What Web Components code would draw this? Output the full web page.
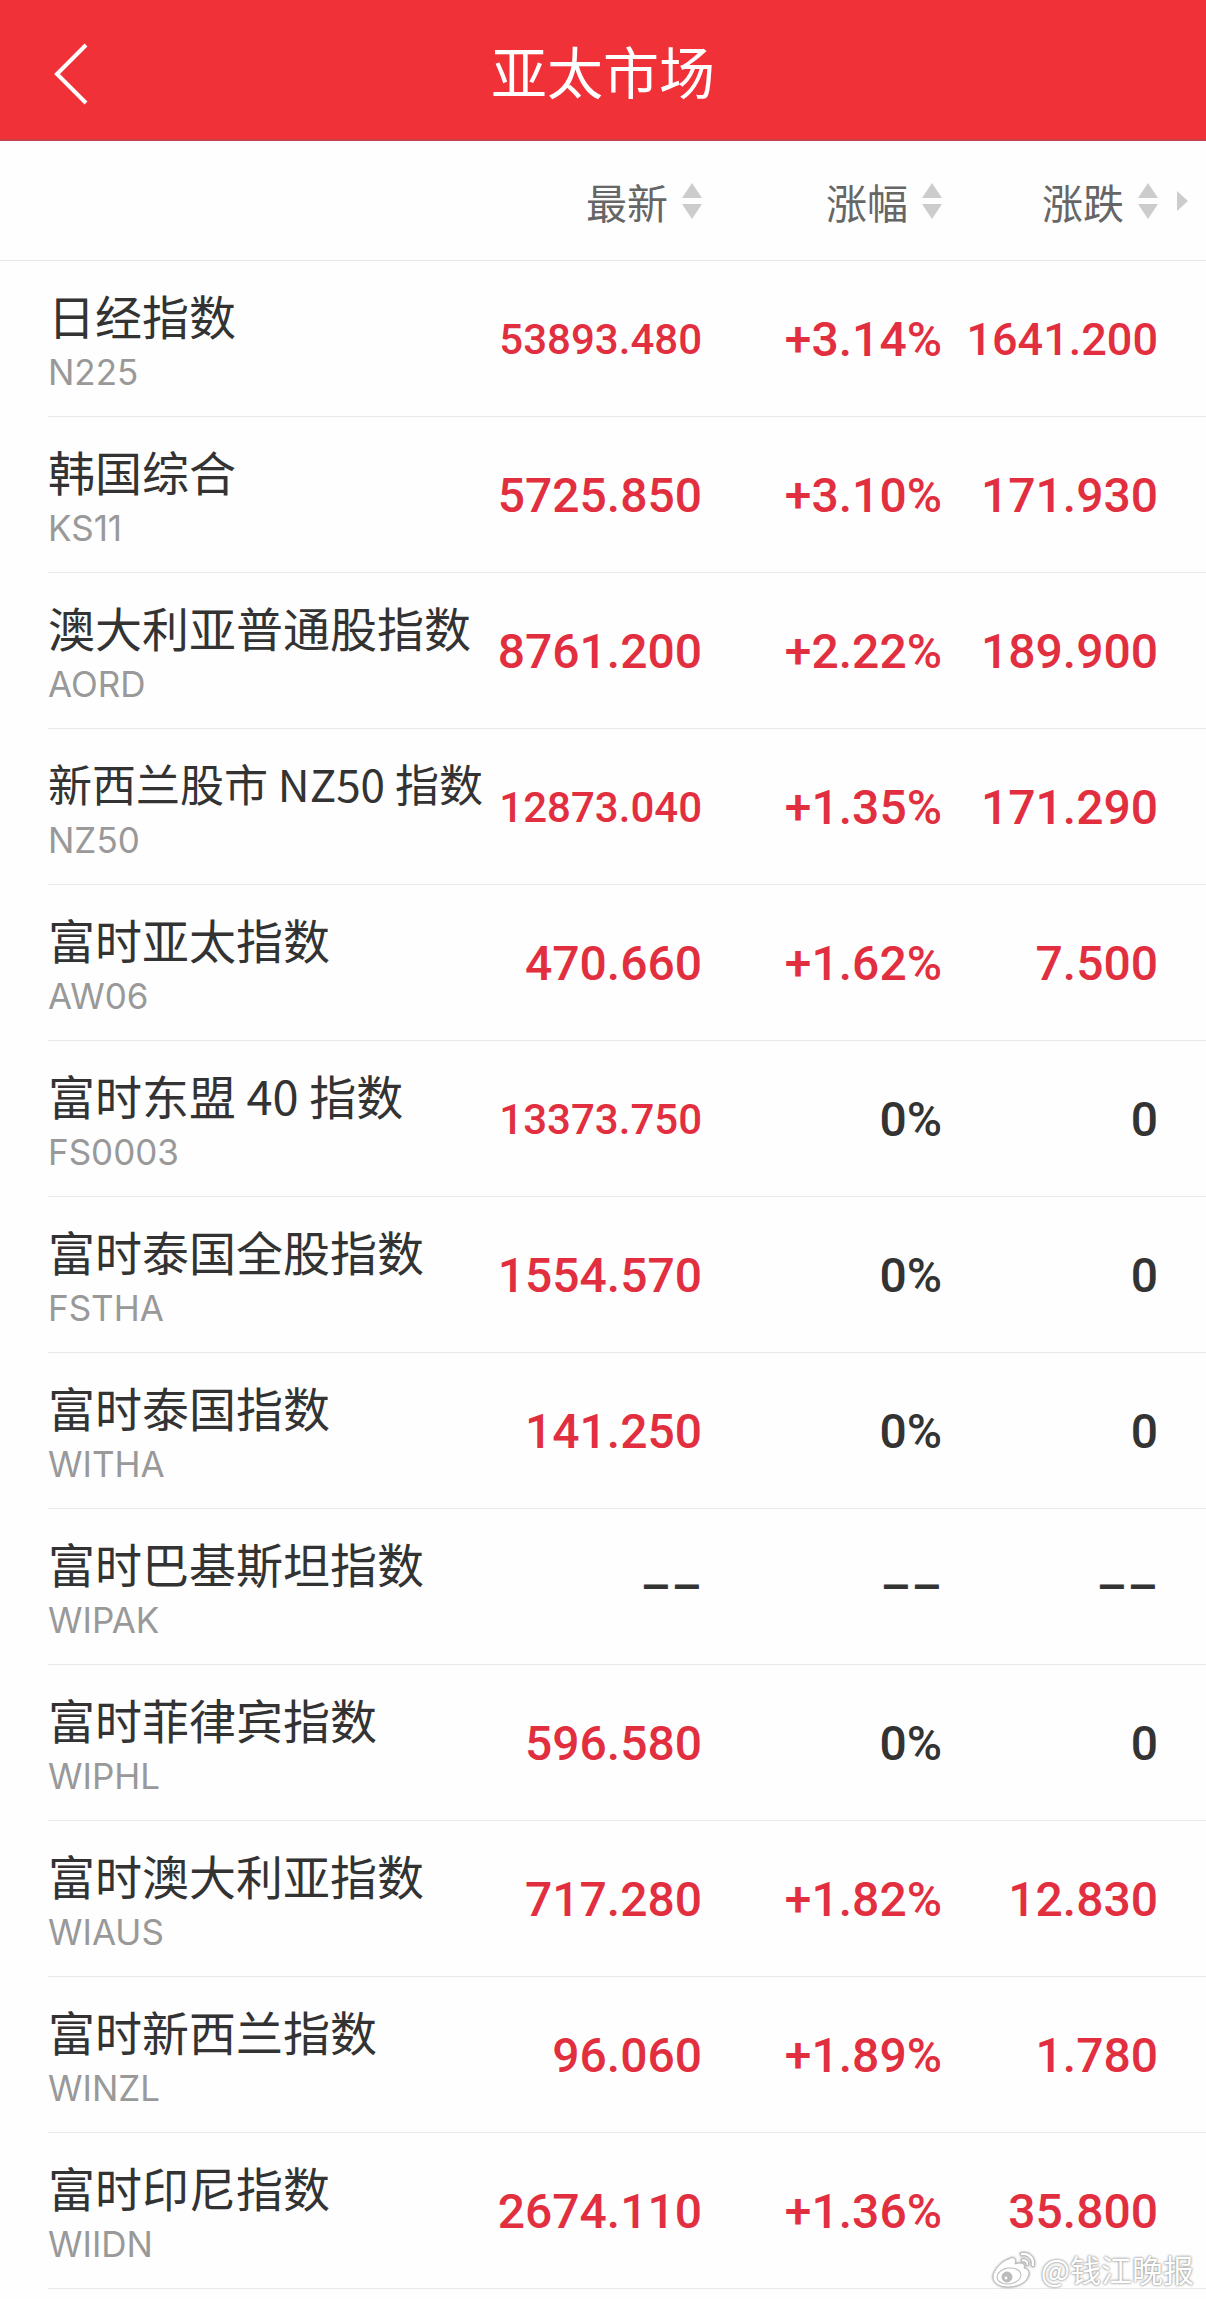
<!DOCTYPE html>
<html lang="zh-CN">
<head>
<meta charset="UTF-8">
<meta name="viewport" content="width=device-width, initial-scale=1">
<title>亚太市场</title>
<style>
  body {
    margin: 0;
    background: #fefefe;
    font-family: "Noto Sans CJK SC", sans-serif;
    color: #333;
  }
</style>
</head>
<body>
<market-page>
  <market-header slot="header">亚太市场</market-header>
  <market-table></market-table>
  <weibo-mark slot="mark">@钱江晚报</weibo-mark>
</market-page>

<script>
// name, code, latest, change %, change, direction
const quotes = [
  ['日经指数', 'N225', '53893.480', '+3.14%', '1641.200', 'up'],
  ['韩国综合', 'KS11', '5725.850', '+3.10%', '171.930', 'up'],
  ['澳大利亚普通股指数', 'AORD', '8761.200', '+2.22%', '189.900', 'up'],
  ['新西兰股市 NZ50 指数', 'NZ50', '12873.040', '+1.35%', '171.290', 'up'],
  ['富时亚太指数', 'AW06', '470.660', '+1.62%', '7.500', 'up'],
  ['富时东盟 40 指数', 'FS0003', '13373.750', '0%', '0', 'flat'],
  ['富时泰国全股指数', 'FSTHA', '1554.570', '0%', '0', 'flat'],
  ['富时泰国指数', 'WITHA', '141.250', '0%', '0', 'flat'],
  ['富时巴基斯坦指数', 'WIPAK', '––', '––', '––', 'none'],
  ['富时菲律宾指数', 'WIPHL', '596.580', '0%', '0', 'flat'],
  ['富时澳大利亚指数', 'WIAUS', '717.280', '+1.82%', '12.830', 'up'],
  ['富时新西兰指数', 'WINZL', '96.060', '+1.89%', '1.780', 'up'],
  ['富时印尼指数', 'WIIDN', '2674.110', '+1.36%', '35.800', 'up']
];

// MarketPage Component
class MarketPage extends HTMLElement {
  constructor() {
    super();
    this.attachShadow({ mode: 'open' });
  }
  connectedCallback() {
    this.shadowRoot.innerHTML = `
      <style>
        :host {
          display: block;
          position: relative;
          padding-bottom: 8px;
        }
        ::slotted(weibo-mark) {
          position: absolute;
          right: 12px;
          bottom: 6px;
        }
      </style>
      <slot name="header"></slot>
      <main><slot></slot></main>
      <slot name="mark"></slot>
    `;
  }
}

// MarketHeader Component
class MarketHeader extends HTMLElement {
  constructor() {
    super();
    this.attachShadow({ mode: 'open' });
  }
  connectedCallback() {
    this.shadowRoot.innerHTML = `
      <style>
        :host { display: block; }
        header {
          display: grid;
          grid-template-columns: 140px 1fr 140px;
          align-items: center;
          height: 141px;
          box-sizing: border-box;
          background: #f13138;
          border-bottom: 2px solid #c8404a;
          color: #fff;
        }
        button {
          display: flex;
          align-items: center;
          height: 100%;
          padding: 8px 0 0 54px;
          border: 0;
          background: none;
          color: inherit;
          cursor: pointer;
        }
        h1 {
          margin: 0;
          font-size: 56px;
          line-height: 80px;
          font-weight: 400;
          text-align: center;
        }
      </style>
      <header>
        <button type="button" aria-label="返回">
          <svg width="34" height="62" viewBox="0 0 34 62" fill="none" stroke="currentColor" stroke-width="4">
            <path d="M32 2 L3 31 L32 60"/>
          </svg>
        </button>
        <h1><slot></slot></h1>
      </header>
    `;
  }
}

// SortButton Component
class SortButton extends HTMLElement {
  constructor() {
    super();
    this.attachShadow({ mode: 'open' });
  }
  connectedCallback() {
    this.shadowRoot.innerHTML = `
      <style>
        :host {
          display: flex;
          justify-content: flex-end;
        }
        button {
          display: flex;
          align-items: center;
          gap: 14px;
          padding: 0;
          border: 0;
          background: none;
          font: inherit;
          color: inherit;
          cursor: pointer;
        }
        svg { display: block; fill: #ccc; }
      </style>
      <button type="button">
        <slot></slot>
        <svg width="20" height="36" viewBox="0 0 20 36">
          <path d="M10 0 L20 15 H0 Z M0 21 H20 L10 36 Z"/>
        </svg>
      </button>
    `;
  }
}

// IndexName Component
class IndexName extends HTMLElement {
  constructor() {
    super();
    this.attachShadow({ mode: 'open' });
  }
  connectedCallback() {
    const code = this.getAttribute('code') || '';
    this.shadowRoot.innerHTML = `
      <style>
        :host {
          display: block;
          white-space: nowrap;
          font-size: 47px;
          line-height: 66px;
        }
        :host([long]) { font-size: 44px; }
        small {
          display: block;
          font-family: Inter, sans-serif;
          font-size: 35px;
          line-height: 48px;
          color: #999;
        }
      </style>
      <slot></slot>
      <small>${code}</small>
    `;
  }
}

// QuoteValue Component
class QuoteValue extends HTMLElement {
  constructor() {
    super();
    this.attachShadow({ mode: 'open' });
  }
  connectedCallback() {
    this.shadowRoot.innerHTML = `
      <style>
        :host {
          display: block;
          padding-top: 2px;
          font-family: Roboto, sans-serif;
          font-size: 48px;
          line-height: 60px;
          font-weight: 500;
          white-space: nowrap;
          color: #333;
        }
        :host([trend="up"]) { color: #e22f40; }
        :host([fit="small"]) { font-size: 42px; }
        :host([fit="medium"]) { font-size: 45px; }
      </style>
      <slot></slot>
    `;
  }
}

// MarketTable Component
class MarketTable extends HTMLElement {
  constructor() {
    super();
    this.attachShadow({ mode: 'open' });
  }
  // Longer figures get a smaller size so they stay inside their column
  fit(text, max) {
    if (text.length <= max) return '';
    return text.length > 8 ? 'small' : 'medium';
  }
  row([name, code, last, pct, change, trend]) {
    const lastTrend = trend === 'none' ? 'none' : 'up';
    return `
      <tr>
        <th scope="row"><index-name code="${code}"${name.length > 11 ? ' long' : ''}>${name}</index-name></th>
        <td><quote-value trend="${lastTrend}" fit="${this.fit(last, 8)}">${last}</quote-value></td>
        <td><quote-value trend="${trend}">${pct}</quote-value></td>
        <td><quote-value trend="${trend}" fit="${this.fit(change, 7)}">${change}</quote-value></td>
      </tr>
    `;
  }
  connectedCallback() {
    this.shadowRoot.innerHTML = `
      <style>
        :host { display: block; }
        table {
          width: 100%;
          table-layout: fixed;
          border-collapse: separate;
          border-spacing: 0;
        }
        .last { width: 210px; }
        .pct { width: 240px; }
        .change { width: 264px; }
        th, td {
          padding: 0;
          text-align: right;
          font-weight: 400;
          vertical-align: middle;
        }
        thead th {
          height: 119px;
          font-size: 41px;
          line-height: 60px;
          color: #666;
          border-bottom: 1px solid #e6e6e6;
        }
        tbody tr {
          height: 156px;
          background: linear-gradient(#e8e8e8, #e8e8e8) no-repeat 48px 100% / 100% 1px;
        }
        tbody th {
          padding-left: 48px;
          text-align: left;
        }
        th:last-child { padding-right: 18px; }
        td:last-child { padding-right: 48px; }
        .tail {
          display: flex;
          align-items: center;
          justify-content: flex-end;
          gap: 19px;
        }
        .tail svg { fill: #ccc; }
      </style>
      <table>
        <colgroup><col><col class="last"><col class="pct"><col class="change"></colgroup>
        <thead>
          <tr>
            <th></th>
            <th scope="col"><sort-button>最新</sort-button></th>
            <th scope="col"><sort-button>涨幅</sort-button></th>
            <th scope="col">
              <div class="tail">
                <sort-button>涨跌</sort-button>
                <svg width="11" height="20" viewBox="0 0 11 20"><path d="M0 0 L11 10 L0 20 Z"/></svg>
              </div>
            </th>
          </tr>
        </thead>
        <tbody>${quotes.map(q => this.row(q)).join('')}</tbody>
      </table>
    `;
  }
}

// WeiboMark Component
class WeiboMark extends HTMLElement {
  constructor() {
    super();
    this.attachShadow({ mode: 'open' });
  }
  connectedCallback() {
    this.shadowRoot.innerHTML = `
      <style>
        :host {
          display: flex;
          align-items: center;
          gap: 5px;
          font-size: 31px;
          line-height: 44px;
          color: #fff;
          text-shadow: 0 0 2px #888, 0 0 3px #aaa;
        }
        svg { filter: drop-shadow(0 0 1px #999); }
      </style>
      <svg width="44" height="38" viewBox="0 0 44 38" fill="#fff" stroke="#bbb" stroke-width="1">
        <path d="M17 9 C21 6 25 8 23 14 C29 12 34 13 32 18 C37 19 38 23 36 27 C33 34 24 37 16 37 C7 37 1 33 1 27 C1 20 11 10 17 9 Z"/>
        <ellipse cx="17" cy="26" rx="12" ry="8" transform="rotate(-8 17 26)"/>
        <circle cx="15" cy="27" r="5" fill="#bbb"/>
        <circle cx="14" cy="28" r="2"/>
        <path d="M28 3 C37 0 45 8 42 17 L39 16 C41 9 35 4 29 6 Z"/>
        <path d="M29 9 C34 8 38 11 36 16 L34 15 C35 12 32 11 30 12 Z"/>
      </svg>
      <span><slot></slot></span>
    `;
  }
}

// Register Components
customElements.define('market-page', MarketPage);
customElements.define('market-header', MarketHeader);
customElements.define('sort-button', SortButton);
customElements.define('index-name', IndexName);
customElements.define('quote-value', QuoteValue);
customElements.define('market-table', MarketTable);
customElements.define('weibo-mark', WeiboMark);
</script>
</body>
</html>
